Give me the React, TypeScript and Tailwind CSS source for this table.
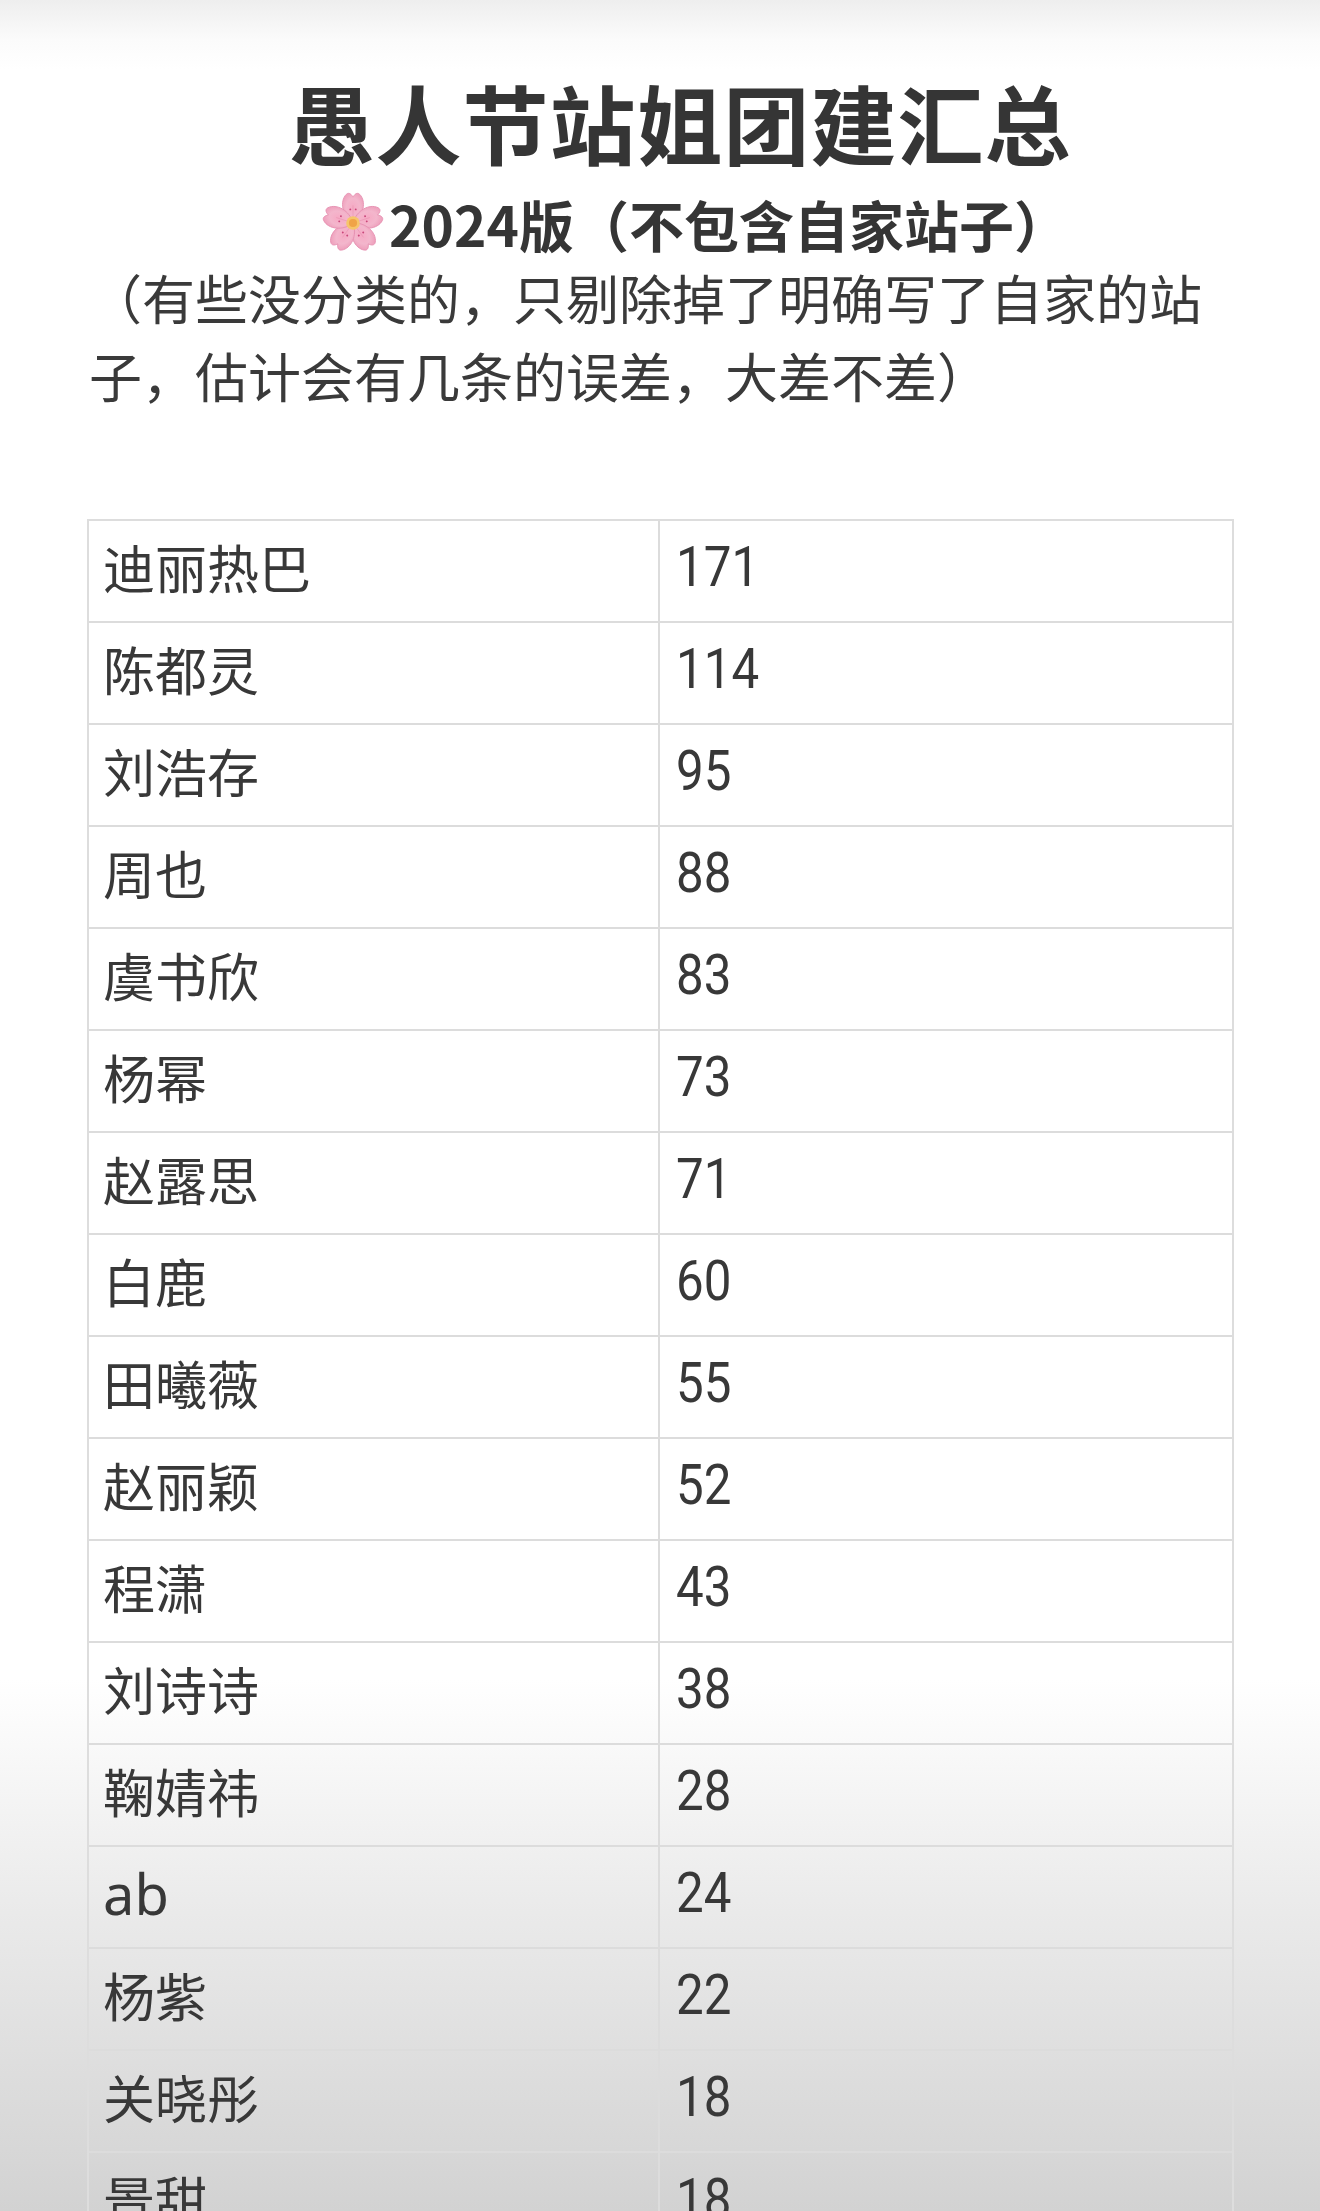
import React from "react";

const rows: [string, string][] = [
  ["迪丽热巴", "171"],
  ["陈都灵", "114"],
  ["刘浩存", "95"],
  ["周也", "88"],
  ["虞书欣", "83"],
  ["杨幂", "73"],
  ["赵露思", "71"],
  ["白鹿", "60"],
  ["田曦薇", "55"],
  ["赵丽颖", "52"],
  ["程潇", "43"],
  ["刘诗诗", "38"],
  ["鞠婧祎", "28"],
  ["ab", "24"],
  ["杨紫", "22"],
  ["关晓彤", "18"],
  ["景甜", "18"],
];

function Blossom() {
  const petals = [0, 72, 144, 216, 288];
  return (
    <svg width="68" height="68" viewBox="0 0 100 100" className="shrink-0">
      <defs>
        <radialGradient id="pg" cx="50%" cy="50%" r="55%">
          <stop offset="0%" stopColor="#f6a9c4" />
          <stop offset="60%" stopColor="#f3b6cc" />
          <stop offset="100%" stopColor="#eea0bc" />
        </radialGradient>
      </defs>
      {petals.map((a) => (
        <g key={a} transform={`rotate(${a} 50 50)`}>
          <path
            d="M50 50 C 34 40, 30 18, 40 8 C 44 4, 48 8, 50 12 C 52 8, 56 4, 60 8 C 70 18, 66 40, 50 50 Z"
            fill="url(#pg)"
            stroke="#e58fb0"
            strokeWidth="1.2"
          />
          <path d="M50 48 L50 24" stroke="#e68aaa" strokeWidth="1" opacity="0.6" />
          <circle cx="46" cy="30" r="1.4" fill="#c9467a" />
          <circle cx="54" cy="30" r="1.4" fill="#c9467a" />
        </g>
      ))}
      <circle cx="50" cy="50" r="10" fill="#f6c56b" />
      <circle cx="50" cy="50" r="6" fill="#f0a347" />
    </svg>
  );
}

export default function App() {
  return (
    <div className="relative w-[1320px] h-[2211px] overflow-hidden bg-[linear-gradient(to_bottom,#eeeeee_0px,#fbfbfb_40px,#ffffff_70px,#ffffff_1680px,#ebebeb_1900px,#d2d2d2_2211px)] font-['Noto_Sans_CJK_SC','Noto_Sans',sans-serif] text-[#363636]">
      <div className="flex flex-col items-center pl-[40px] pt-[62px]">
        <h1 className="text-[86px] leading-[120px] font-bold tracking-[1px] text-[#353535]">
          愚人节站姐团建汇总
        </h1>
        <div className="mt-[6px] ml-[28px] h-[70px] flex items-center">
          <Blossom />
          <span className="ml-[2px] text-[55px] leading-[70px] font-bold text-[#353535]">
            2024版（不包含自家站子）
          </span>
        </div>
      </div>
      <p className="px-[89px] text-[53px] leading-[78px] text-[#3a3a3a]">
        （有些没分类的，只剔除掉了明确写了自家的站子，估计会有几条的误差，大差不差）
      </p>
      <div className="mt-[105px] ml-[87px] w-[1147px] border-t-2 border-l-2 border-r-2 border-[#dddddd]">
        {rows.map(([name, n]) => (
          <div
            key={name}
            className="grid grid-cols-[571px_1fr] h-[102px] border-b-2 border-[#dcdcdc]"
          >
            <div className="flex items-center pl-[14px] pb-[8px] border-r-2 border-[#dcdcdc] text-[52px] text-[#383838]">
              {name === "ab" ? (
                <span className="font-['Noto_Sans',sans-serif] text-[56px]">ab</span>
              ) : (
                name
              )}
            </div>
            <div className="flex items-center pl-[16px] pb-[8px] text-[56px] text-[#383838]">
              <span className="inline-block origin-left scale-x-[0.88] font-['Roboto',sans-serif] font-normal">
                {n}
              </span>
            </div>
          </div>
        ))}
      </div>
    </div>
  );
}
